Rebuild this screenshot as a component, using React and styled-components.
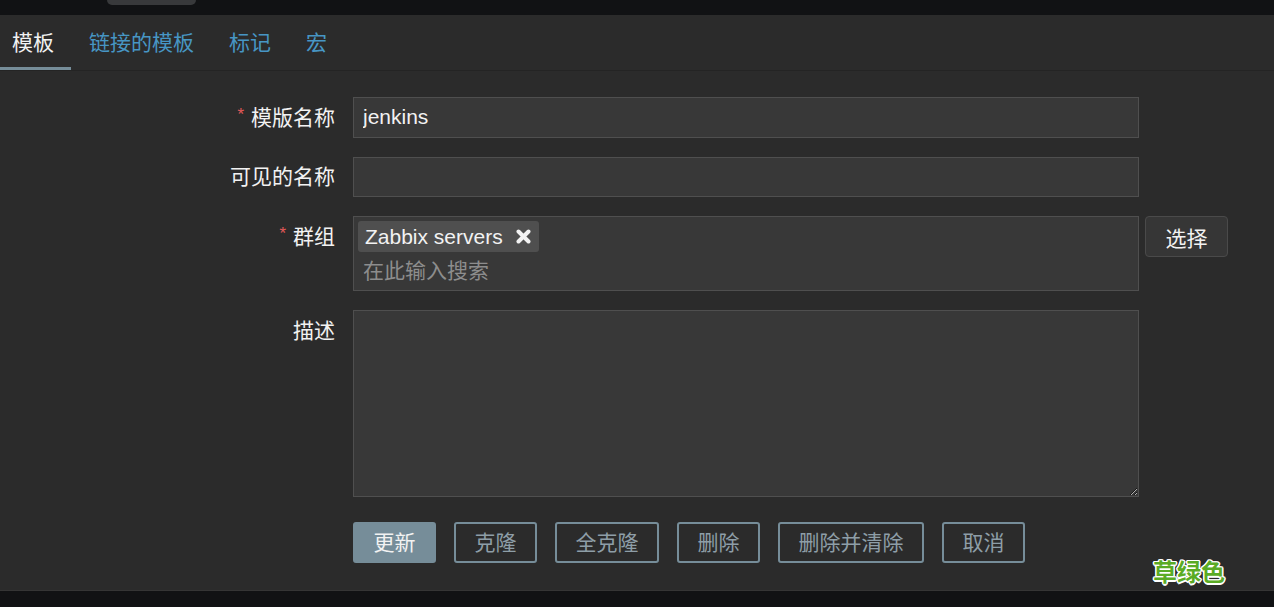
import React from "react";
import styled, { createGlobalStyle, css } from "styled-components";

const GlobalStyle = createGlobalStyle`
  html, body {
    margin: 0;
    padding: 0;
    background: #111214;
  }
  body {
    font-family: "Liberation Sans", "Noto Sans CJK SC", sans-serif;
    color: #f2f2f2;
  }
  * { box-sizing: border-box; }
`;

const Page = styled.div`
  position: relative;
  width: 1274px;
  height: 607px;
  display: flex;
  flex-direction: column;
  background: #111214;
  overflow: hidden;
`;

const TopStrip = styled.div`
  height: 15px;
  flex: none;
  display: flex;
  padding-left: 107px;
`;

const StripHandle = styled.div`
  width: 89px;
  height: 5px;
  background: #38393b;
  border-radius: 0 0 5px 5px;
`;

const Panel = styled.div`
  height: 576px;
  flex: none;
  background: #2b2b2b;
  border-bottom: 1px solid #353535;
  display: flex;
  flex-direction: column;
`;

const TabBar = styled.nav`
  display: flex;
  align-items: flex-end;
  gap: 6px;
  height: 56px;
  border-bottom: 1px solid #242424;
`;

const Tab = styled.a`
  display: block;
  padding: 4px 17px 0 12px;
  line-height: 48px;
  font-size: 21px;
  text-decoration: none;
  border-bottom: 3px solid transparent;
  color: #4796c4;
  cursor: pointer;
  ${(p) =>
    p.$active &&
    css`
      color: #f2f2f2;
      border-bottom-color: #768d99;
    `}
`;

const Form = styled.form`
  display: flex;
  flex-direction: column;
  gap: 19px;
  padding-top: 26px;
`;

const Row = styled.div`
  display: flex;
  align-items: flex-start;
`;

const Label = styled.label`
  width: 335px;
  height: 40.5px;
  margin-right: 18px;
  flex: none;
  display: flex;
  align-items: center;
  justify-content: flex-end;
  font-size: 21px;
  line-height: 1;
  color: #f2f2f2;
  white-space: nowrap;
`;

const Required = styled.span`
  color: #e45959;
  font-size: 17px;
  line-height: 1;
  margin-right: 7px;
  position: relative;
  top: -3px;
`;

const TextInput = styled.input`
  width: 786px;
  height: 40.5px;
  padding: 0 9px;
  background: #383838;
  border: 1px solid #4f4f4f;
  border-radius: 0;
  color: #f2f2f2;
  font-family: inherit;
  font-size: 21px;
  outline: none;
`;

const MultiSelect = styled.div`
  width: 786px;
  height: 75px;
  padding: 4px;
  background: #383838;
  border: 1px solid #4f4f4f;
  display: flex;
  flex-direction: column;
  align-items: flex-start;
`;

const Chip = styled.span`
  display: inline-flex;
  align-items: center;
  gap: 13px;
  height: 31px;
  padding: 0 8px 0 7px;
  background: #4f4f4f;
  border-radius: 3px;
  font-size: 21px;
  line-height: 31px;
  color: #f2f2f2;
`;

const ChipRemove = styled.svg`
  width: 15px;
  height: 15px;
  flex: none;
`;

const SearchInput = styled.input`
  width: 100%;
  height: 30px;
  margin-top: 4px;
  padding: 0 5px;
  background: transparent;
  border: none;
  outline: none;
  color: #f2f2f2;
  font-family: inherit;
  font-size: 21px;
  &::placeholder {
    color: #8d8d8d;
  }
`;

const SideButton = styled.button`
  margin-left: 6px;
  width: 83px;
  height: 41px;
  background: #363636;
  border: 1px solid #4a4a4a;
  border-radius: 4px;
  color: #f2f2f2;
  font-family: inherit;
  font-size: 21px;
  padding: 0;
`;

const TextArea = styled.textarea`
  display: block;
  width: 786px;
  height: 187px;
  padding: 6px 9px;
  background: #383838;
  border: 1px solid #4f4f4f;
  color: #f2f2f2;
  color-scheme: dark;
  font-family: inherit;
  font-size: 21px;
  resize: vertical;
  outline: none;
`;

const ButtonRow = styled.div`
  display: flex;
  gap: 18px;
  padding-left: 353px;
  margin-top: 6px;
`;

const Button = styled.button`
  height: 41px;
  padding: 0 18.5px;
  border: 2px solid #768d99;
  border-radius: 3px;
  background: transparent;
  color: #8e9ea7;
  font-family: inherit;
  font-size: 21px;
  line-height: 37px;
  cursor: pointer;
  ${(p) =>
    p.$primary &&
    css`
      background: #768d99;
      color: #f2f2f2;
    `}
`;

const Badge = styled.div`
  position: absolute;
  left: 1153px;
  top: 558px;
  font-size: 24px;
  font-weight: 700;
  line-height: 30px;
  color: #5aab24;
  text-shadow:
    1.5px 0 0 #fff, -1.5px 0 0 #fff, 0 1.5px 0 #fff, 0 -1.5px 0 #fff,
    1px 1px 0 #fff, -1px -1px 0 #fff, 1px -1px 0 #fff, -1px 1px 0 #fff;
`;

const tabs = ["模板", "链接的模板", "标记", "宏"];
const actions = [
  { label: "更新", primary: true },
  { label: "克隆" },
  { label: "全克隆" },
  { label: "删除" },
  { label: "删除并清除" },
  { label: "取消" },
];

export default function App() {
  return (
    <>
      <GlobalStyle />
      <Page>
        <TopStrip>
          <StripHandle />
        </TopStrip>
        <Panel>
          <TabBar>
            {tabs.map((t, i) => (
              <Tab key={t} $active={i === 0}>
                {t}
              </Tab>
            ))}
          </TabBar>
          <Form onSubmit={(e) => e.preventDefault()}>
            <Row>
              <Label>
                <Required>*</Required>模版名称
              </Label>
              <TextInput defaultValue="jenkins" />
            </Row>
            <Row>
              <Label>可见的名称</Label>
              <TextInput defaultValue="" />
            </Row>
            <Row>
              <Label>
                <Required>*</Required>群组
              </Label>
              <MultiSelect>
                <Chip>
                  Zabbix servers
                  <ChipRemove viewBox="0 0 15 15">
                    <path
                      d="M2.5 2.5 L12.5 12.5 M12.5 2.5 L2.5 12.5"
                      stroke="#f2f2f2"
                      strokeWidth="4"
                      strokeLinecap="round"
                      fill="none"
                    />
                  </ChipRemove>
                </Chip>
                <SearchInput placeholder="在此输入搜索" />
              </MultiSelect>
              <SideButton type="button">选择</SideButton>
            </Row>
            <Row>
              <Label>描述</Label>
              <TextArea />
            </Row>
            <ButtonRow>
              {actions.map((a) => (
                <Button key={a.label} type="button" $primary={a.primary}>
                  {a.label}
                </Button>
              ))}
            </ButtonRow>
          </Form>
        </Panel>
        <Badge>草绿色</Badge>
      </Page>
    </>
  );
}
